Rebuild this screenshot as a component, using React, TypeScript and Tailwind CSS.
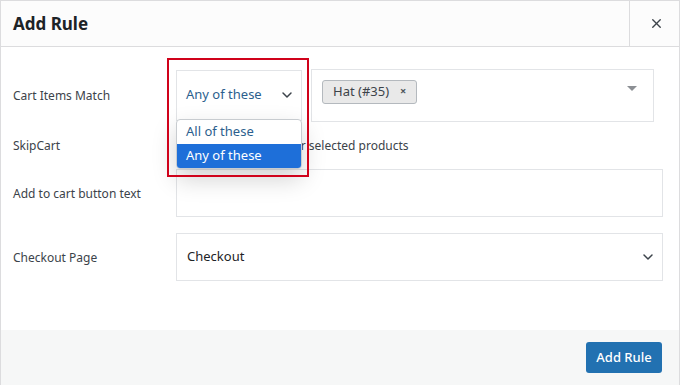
import { X, ChevronDown } from "lucide-react";

const FONT = { fontFamily: '"Noto Sans", "Open Sans", Arial, sans-serif' };

function Label({ children }: { children: React.ReactNode }) {
  return <div className="w-[175px] shrink-0 pl-[12px] pt-[2px] text-[12px] text-[#3c434a]">{children}</div>;
}

export default function App() {
  return (
    <div style={FONT} className="w-[680px] h-[385px] bg-white flex flex-col border-x border-[#dcdcde] overflow-hidden">
      {/* Header */}
      <div className="h-[47px] flex items-stretch bg-[#fcfcfc] border-b border-t border-[#dcdcde] shrink-0">
        <h1 className="flex-1 flex items-center pl-[12px] text-[17px] font-bold text-[#1d2327]">Add Rule</h1>
        <button className="w-[50px] border-l border-[#dcdcde] flex items-center justify-center pl-[4px] text-[#3c434a]">
          <X size={15} strokeWidth={2.2} />
        </button>
      </div>

      {/* Body */}
      <div className="flex-1 flex flex-col pt-[22px]">
        {/* Cart Items Match */}
        <div className="flex items-center h-[52px]">
          <Label>Cart Items Match</Label>
          <div className="relative w-[126px] h-[51px] shrink-0">
            <div className="absolute left-[-9px] top-[-12px] w-[142px] h-[119px] border-2 border-[#d0021b] z-20 pointer-events-none" />
            <div className="h-full border border-[#e2e4e7] flex items-center justify-between pl-[9px] pr-[6px] text-[13px] text-[#2c5f8e]">
              <span>Any of these</span>
              <ChevronDown size={16} strokeWidth={2.2} className="text-[#3c434a]" />
            </div>
            <div className="absolute left-0 top-[49px] w-[126px] bg-white border border-[#c8ccd0] rounded-[4px] shadow-[0_10px_24px_rgba(0,0,0,0.18)] z-10 overflow-hidden text-[13px]">
              <div className="h-[24px] pl-[9px] flex items-center text-[#2c5f8e]">All of these</div>
              <div className="h-[24px] pl-[9px] flex items-center bg-[#1e6fd9] text-white">Any of these</div>
            </div>
          </div>
          <div className="ml-[9px] w-[343px] h-[53px] border border-[#e2e4e7] flex items-start justify-between pt-[10px] pl-[10px] pr-[16px]">
            <span className="h-[24px] px-[10px] flex items-center gap-[11px] bg-[#e9e9e9] border border-[#b4b9be] rounded-[3px] text-[13px] text-[#3c434a]">
              Hat (#35)
              <span className="text-[11px] font-bold text-[#50575e]">×</span>
            </span>
            <span className="mt-[6px] w-0 h-0 border-l-[5px] border-r-[5px] border-t-[5px] border-l-transparent border-r-transparent border-t-[#8c8f94]" />
          </div>
        </div>

        {/* SkipCart */}
        <div className="flex items-center h-[47px]">
          <Label>SkipCart</Label>
          <div className="flex items-center gap-[6px] pt-[2px] text-[12px] text-[#3c434a]">
            <span className="w-[16px] h-[16px] border border-[#8c8f94] rounded-[3px] bg-white" />
            <span>Enable SkipCart for selected products</span>
          </div>
        </div>

        {/* Add to cart button text */}
        <div className="flex items-center h-[48px] mt-[1px]">
          <Label>Add to cart button text</Label>
          <div className="w-[487px] h-[48px] border border-[#e2e4e7]" />
        </div>

        {/* Checkout Page */}
        <div className="flex items-center h-[48px] mt-[16px]">
          <Label>Checkout Page</Label>
          <div className="w-[487px] h-[48px] border border-[#e2e4e7] flex items-center justify-between pl-[10px] pr-[6px] text-[13px] text-[#1d2327]">
            <span>Checkout</span>
            <ChevronDown size={16} strokeWidth={2.2} className="text-[#3c434a]" />
          </div>
        </div>
      </div>

      {/* Footer */}
      <div className="h-[55px] bg-[#f6f7f7] flex items-center justify-end pr-[17px] shrink-0">
        <button className="h-[31px] w-[76px] rounded-[3px] bg-[#2271b1] text-white text-[13px] font-medium">Add Rule</button>
      </div>
    </div>
  );
}
